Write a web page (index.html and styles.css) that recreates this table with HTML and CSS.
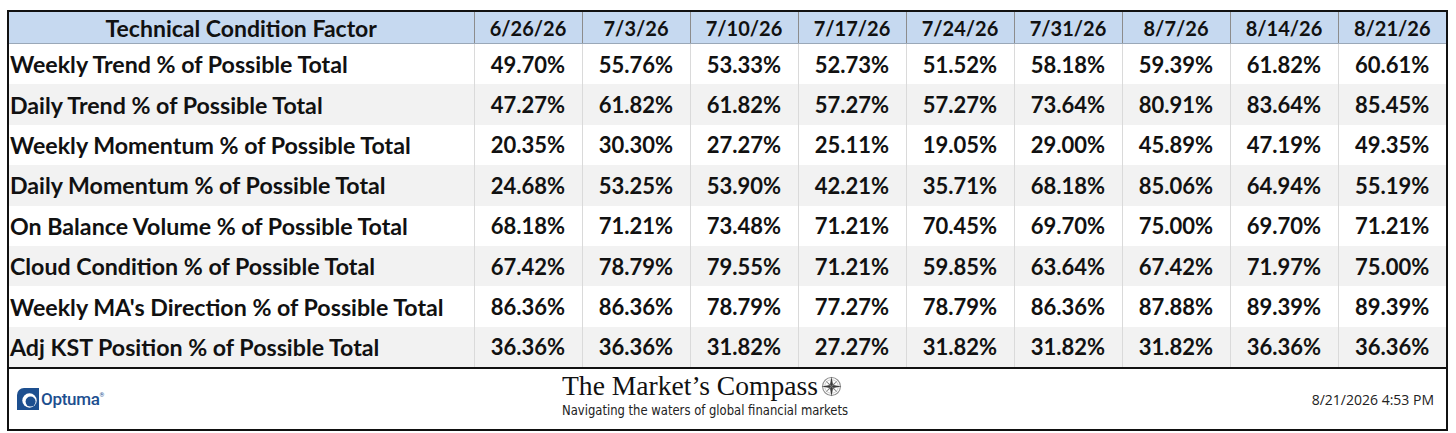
FILE: index.html
```html
<!DOCTYPE html>
<html>
<head>
<meta charset="utf-8">
<link rel="stylesheet" href="styles.css">
</head>
<body>
<div class="frame">
  <table class="tcf">
    <colgroup>
      <col class="c-label">
      <col class="c-num"><col class="c-num"><col class="c-num"><col class="c-num"><col class="c-num"><col class="c-num"><col class="c-num"><col class="c-num"><col class="c-num">
    </colgroup>
    <thead>
      <tr>
        <th>Technical Condition Factor</th>
        <th>6/26/26</th><th>7/3/26</th><th>7/10/26</th><th>7/17/26</th><th>7/24/26</th><th>7/31/26</th><th>8/7/26</th><th>8/14/26</th><th>8/21/26</th>
      </tr>
    </thead>
    <tbody>
      <tr><td>Weekly Trend % of Possible Total</td><td>49.70%</td><td>55.76%</td><td>53.33%</td><td>52.73%</td><td>51.52%</td><td>58.18%</td><td>59.39%</td><td>61.82%</td><td>60.61%</td></tr>
      <tr><td>Daily Trend % of Possible Total</td><td>47.27%</td><td>61.82%</td><td>61.82%</td><td>57.27%</td><td>57.27%</td><td>73.64%</td><td>80.91%</td><td>83.64%</td><td>85.45%</td></tr>
      <tr><td>Weekly Momentum % of Possible Total</td><td>20.35%</td><td>30.30%</td><td>27.27%</td><td>25.11%</td><td>19.05%</td><td>29.00%</td><td>45.89%</td><td>47.19%</td><td>49.35%</td></tr>
      <tr><td>Daily Momentum % of Possible Total</td><td>24.68%</td><td>53.25%</td><td>53.90%</td><td>42.21%</td><td>35.71%</td><td>68.18%</td><td>85.06%</td><td>64.94%</td><td>55.19%</td></tr>
      <tr><td>On Balance Volume % of Possible Total</td><td>68.18%</td><td>71.21%</td><td>73.48%</td><td>71.21%</td><td>70.45%</td><td>69.70%</td><td>75.00%</td><td>69.70%</td><td>71.21%</td></tr>
      <tr><td>Cloud Condition % of Possible Total</td><td>67.42%</td><td>78.79%</td><td>79.55%</td><td>71.21%</td><td>59.85%</td><td>63.64%</td><td>67.42%</td><td>71.97%</td><td>75.00%</td></tr>
      <tr><td>Weekly MA's Direction % of Possible Total</td><td>86.36%</td><td>86.36%</td><td>78.79%</td><td>77.27%</td><td>78.79%</td><td>86.36%</td><td>87.88%</td><td>89.39%</td><td>89.39%</td></tr>
      <tr><td>Adj KST Position % of Possible Total</td><td>36.36%</td><td>36.36%</td><td>31.82%</td><td>27.27%</td><td>31.82%</td><td>31.82%</td><td>31.82%</td><td>36.36%</td><td>36.36%</td></tr>
    </tbody>
  </table>
  <div class="footer">
    <div class="optuma">
      <svg class="optuma-mark" width="22" height="22" viewBox="0 0 22 22">
        <path d="M7 0 H22 V22 H0 V7 A7 7 0 0 1 7 0 Z" fill="#1d4f8f"/>
        <circle cx="12.5" cy="12.5" r="7.2" fill="#ffffff"/>
        <circle cx="13.6" cy="13.6" r="5" fill="#1d4f8f"/>
      </svg>
      <span class="optuma-word">Optuma</span><span class="optuma-reg">®</span>
    </div>
    <div class="brand">
      <div class="brand-title">The Market’s Compass<svg class="compass" width="21" height="21" viewBox="0 0 40 40">
          <circle cx="20" cy="20" r="17" fill="none" stroke="#8a8a8a" stroke-width="2"/>
          <circle cx="20" cy="20" r="13" fill="none" stroke="#b0b0b0" stroke-width="1.2"/>
          <polygon points="20,1 23,17 20,20 17,17" fill="#3a3a3a"/>
          <polygon points="20,39 17,23 20,20 23,23" fill="#3a3a3a"/>
          <polygon points="1,20 17,17 20,20 17,23" fill="#3a3a3a"/>
          <polygon points="39,20 23,23 20,20 23,17" fill="#3a3a3a"/>
          <polygon points="7,7 19,17 20,20 17,19" fill="#777"/>
          <polygon points="33,33 21,23 20,20 23,21" fill="#777"/>
          <polygon points="33,7 23,19 20,20 21,17" fill="#777"/>
          <polygon points="7,33 17,21 20,20 19,23" fill="#777"/>
        </svg></div>
      <div class="brand-tag"><span class="brand-tag-text">Navigating the waters of global financial markets</span></div>
    </div>
    <div class="stamp">8/21/2026 4:53 PM</div>
  </div>
</div>
</body>
</html>
```

FILE: styles.css
```css
html, body {
  margin: 0;
  padding: 0;
  background: #ffffff;
}

.frame {
  margin: 10px 0 0 7px;
  width: 1437px;
  border: 2px solid #111111;
}

.tcf {
  border-collapse: collapse;
  table-layout: fixed;
  width: 1437px;
  font-family: "Lato", "Liberation Sans", sans-serif;
  font-weight: 700;
  color: #111111;
}

.c-label { width: 465px; }
.c-num { width: 108px; }

.tcf th {
  background: #c6d9f0;
  height: 31px;
  padding: 0;
  font-size: 20px;
  font-weight: 700;
  text-align: center;
  border-left: 1px solid #8c8c8c;
  border-bottom: 1px solid #9aa8b8;
}

.tcf th:first-child {
  border-left: none;
  font-size: 23px;
}

.tcf td {
  height: 40.4px;
  padding: 0;
  font-size: 22px;
  text-align: center;
  border-left: 1px solid #dadada;
}

.tcf td:first-child {
  border-left: none;
  text-align: left;
  padding-left: 1px;
  font-size: 23.2px;
}

.tcf tbody tr:nth-child(even) td { background: #f2f2f2; }

.footer {
  border-top: 2px solid #111111;
  height: 60px;
  display: grid;
  grid-template-columns: 545px auto 1fr auto;
  align-items: center;
  padding: 0 12px 0 8px;
}

.optuma {
  display: flex;
  align-items: center;
  color: #1d4f8f;
  font-family: "Roboto", "Liberation Sans", sans-serif;
}

.optuma-mark { display: block; margin-right: 2px; }

.optuma-word {
  font-size: 17px;
  font-weight: 500;
  letter-spacing: -0.3px;
}

.optuma-reg {
  font-size: 6px;
  align-self: flex-start;
  margin-top: 3px;
}

.brand {
  grid-column: 2;
  align-self: start;
  display: flex;
  flex-direction: column;
  padding-top: 2px;
}

.brand-title {
  display: flex;
  align-items: center;
  font-family: "Liberation Serif", serif;
  font-size: 27.6px;
  line-height: 30px;
  color: #111111;
}

.compass { display: block; margin-left: 3px; }

.brand-tag {
  font-family: "DejaVu Sans Condensed", "DejaVu Sans", sans-serif;
  font-size: 14.5px;
  line-height: 18px;
  color: #222222;
  white-space: nowrap;
}

.brand-tag-text {
  display: inline-block;
  transform: scaleX(0.89);
  transform-origin: left center;
}

.stamp {
  grid-column: 4;
  font-family: "Open Sans", "Noto Sans", sans-serif;
  font-size: 14px;
  color: #222222;
}
```
